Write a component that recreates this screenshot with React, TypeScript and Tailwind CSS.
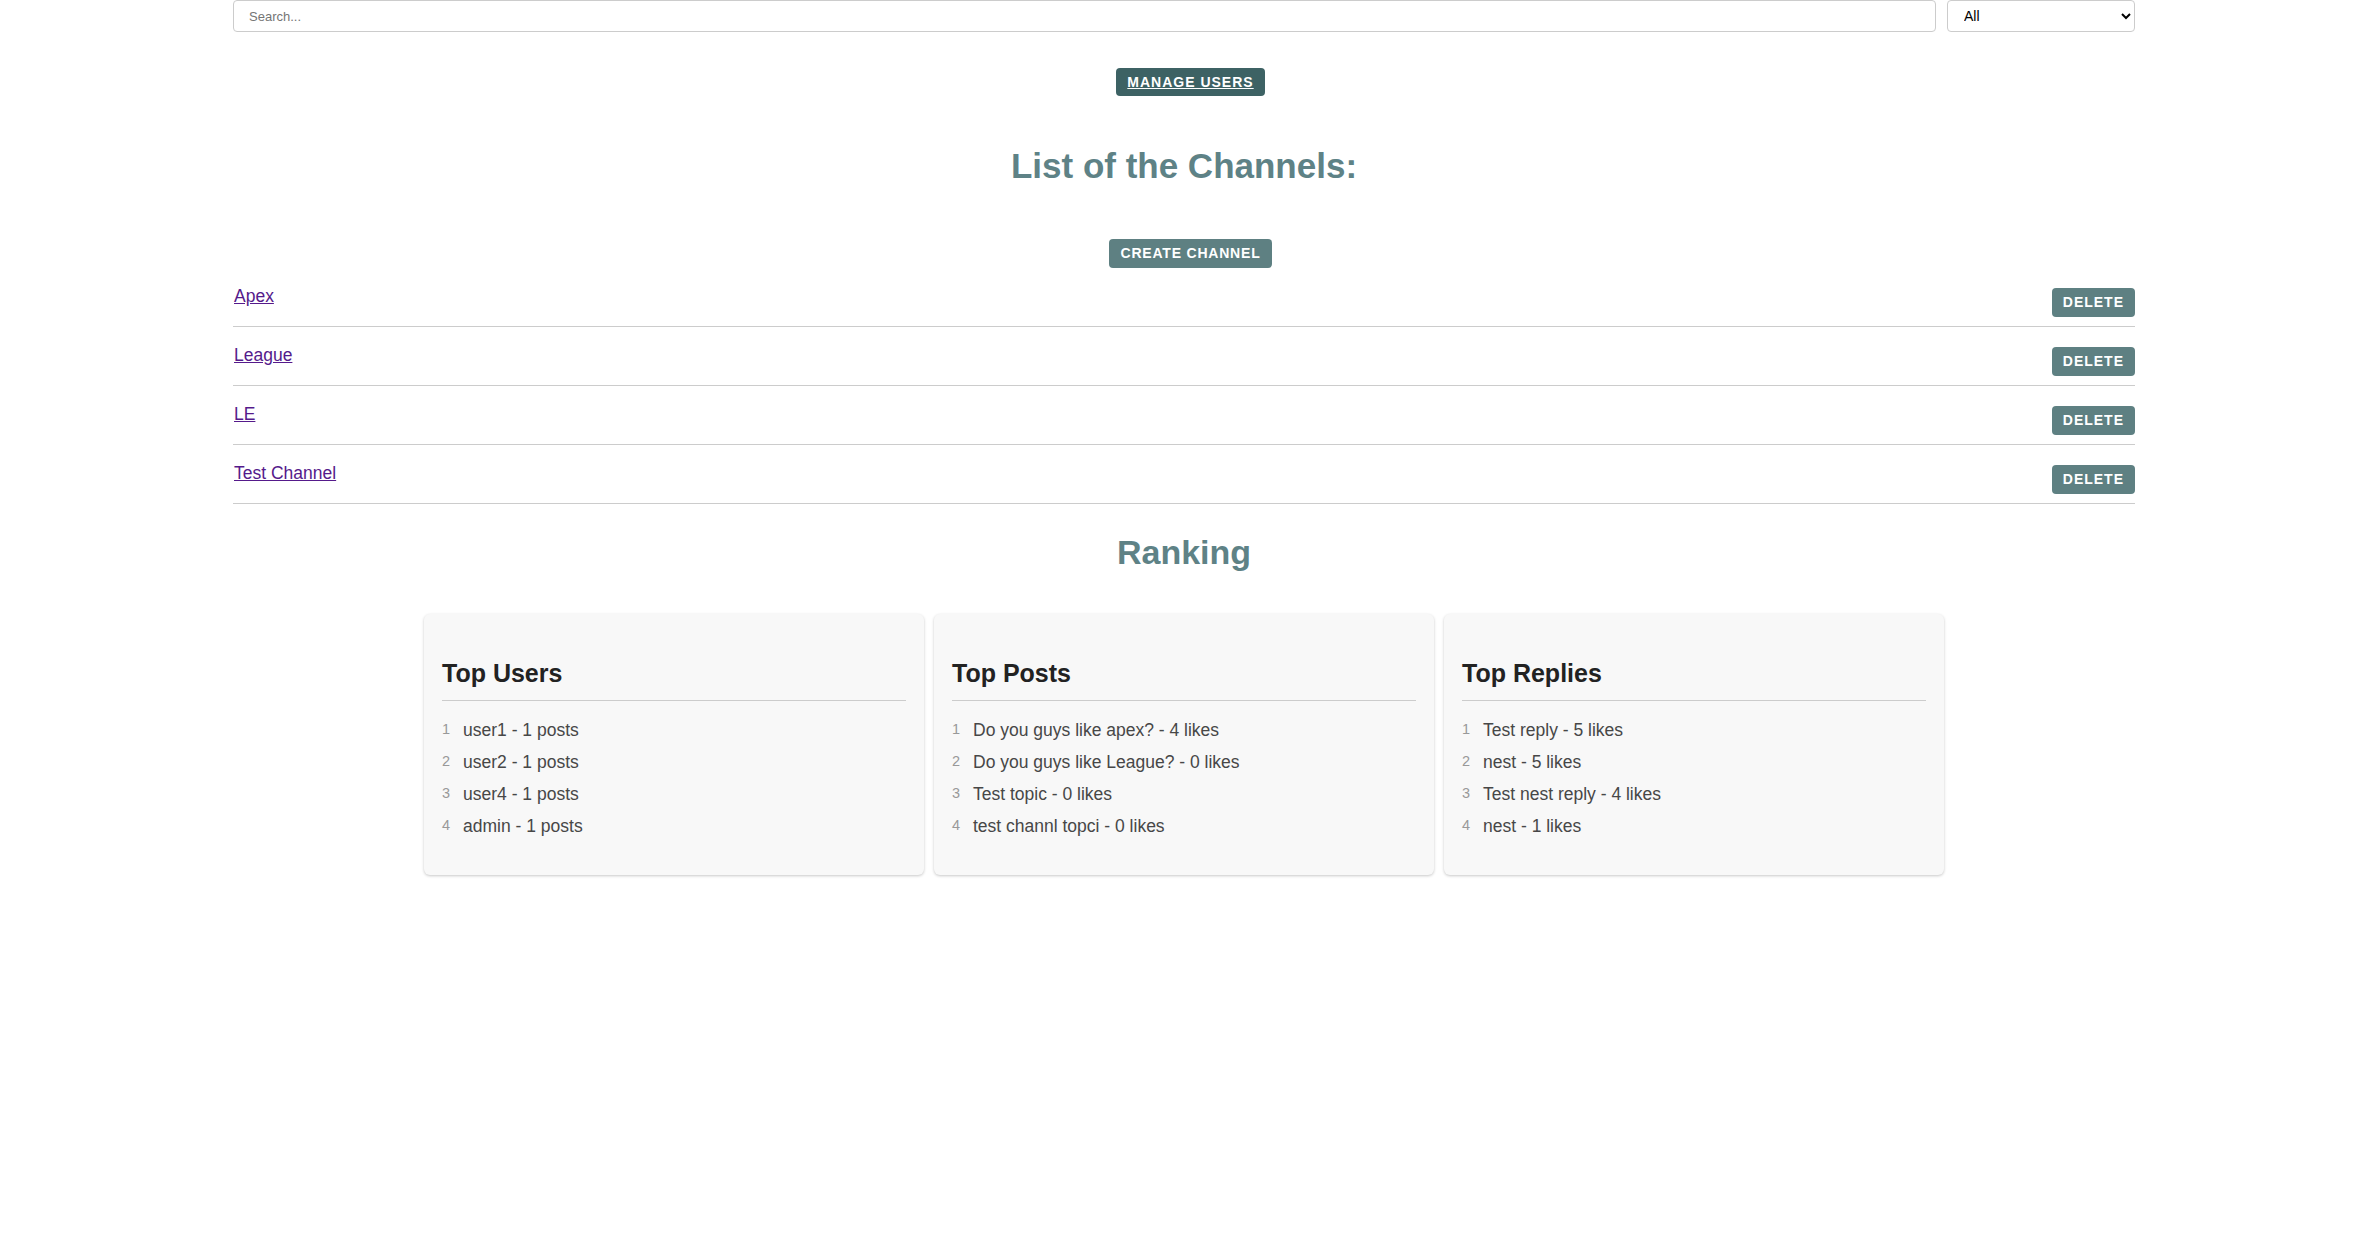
import React from "react";

const channels = ["Apex", "League", "LE", "Test Channel"];

const rankings = [
  {
    title: "Top Users",
    items: ["user1 - 1 posts", "user2 - 1 posts", "user4 - 1 posts", "admin - 1 posts"],
  },
  {
    title: "Top Posts",
    items: [
      "Do you guys like apex? - 4 likes",
      "Do you guys like League? - 0 likes",
      "Test topic - 0 likes",
      "test channl topci - 0 likes",
    ],
  },
  {
    title: "Top Replies",
    items: ["Test reply - 5 likes", "nest - 5 likes", "Test nest reply - 4 likes", "nest - 1 likes"],
  },
];

function RankCard({ title, items }: { title: string; items: string[] }) {
  return (
    <div className="w-[500px] rounded-[6px] bg-[#f8f8f8] px-[18px] pt-[45px] pb-[33px] shadow-[0_1px_3px_rgba(0,0,0,0.22)]">
      <h3 className="border-b border-[#cccccc] pb-[12px] text-[25px] font-bold leading-[29px] text-[#222]">
        {title}
      </h3>
      <ol className="mt-[13px]">
        {items.map((item, i) => (
          <li key={i} className="text-[17.5px] leading-[32px] text-[#474747]">
            <span className="relative -top-[2px] inline-block w-[21px] text-[14.5px] leading-none text-[#999]">
              {i + 1}
            </span>
            {item}
          </li>
        ))}
      </ol>
    </div>
  );
}

export default function App() {
  return (
    <div className="min-h-screen bg-white font-['Liberation_Sans',Arial,sans-serif]">
      <div className="mx-auto w-[1902px] translate-x-[1px]">
        <div className="flex gap-[11px]">
          <input
            placeholder="Search..."
            className="h-[32px] flex-1 rounded-[4px] border border-[#cccccc] px-[15px] text-[13px] text-[#333] outline-none placeholder:text-[#757575]"
          />
          <select className="h-[32px] w-[188px] rounded-[4px] border border-[#cccccc] bg-white pl-[12px] pr-[6px] text-[14px] text-black">
            <option>All</option>
          </select>
        </div>

        <div className="mt-[36px] flex justify-center">
          <button className="ml-[13px] rounded-[4px] bg-[#3d6264] px-[11px] py-[6px] text-[14px] font-bold leading-[16px] tracking-[1px] text-white underline">
            MANAGE USERS
          </button>
        </div>

        <h1 className="mt-[50px] text-center text-[35px] font-bold leading-[40px] text-[#5e8286]">
          List of the Channels:
        </h1>

        <div className="mt-[53px] flex justify-center">
          <button className="ml-[13px] rounded-[4px] bg-[#5e8082] px-[11px] py-[6px] text-[14px] font-bold leading-[17px] tracking-[0.8px] text-white">
            CREATE CHANNEL
          </button>
        </div>

        <ul>
          {channels.map((name) => (
            <li key={name} className="flex items-start justify-between border-b border-[#cccccc] pt-[20px] pb-[9px]">
              <a href="#" className="ml-[1px] text-[17.5px] leading-[17px] text-[#551a8b] underline">
                {name}
              </a>
              <button className="rounded-[4px] bg-[#5e8082] px-[11px] py-[6px] text-[14px] font-bold leading-[17px] tracking-[1px] text-white">
                DELETE
              </button>
            </li>
          ))}
        </ul>

        <h2 className="mt-[29px] text-center text-[34px] font-bold leading-[39px] text-[#5e8286]">Ranking</h2>

        <div className="mt-[42px] flex justify-center gap-[10px]">
          {rankings.map((r) => (
            <RankCard key={r.title} title={r.title} items={r.items} />
          ))}
        </div>
      </div>
    </div>
  );
}
